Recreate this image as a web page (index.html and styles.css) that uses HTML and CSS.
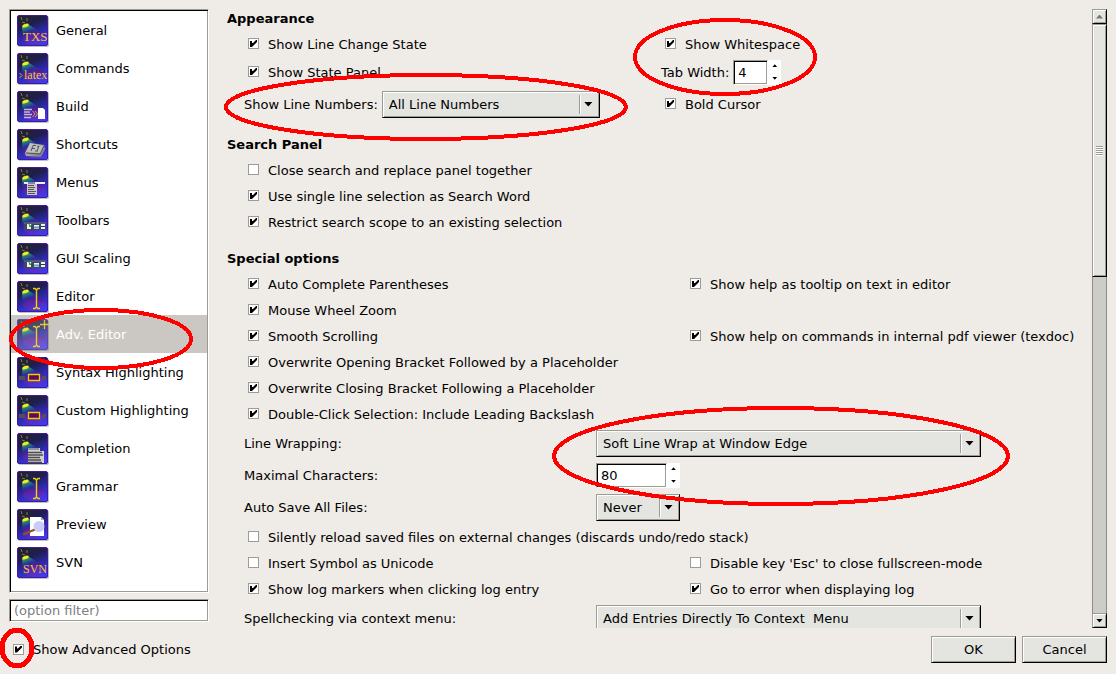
FILE: index.html
```html
<!DOCTYPE html>
<html lang="en">
<head>
<meta charset="utf-8">
<title>Configure TeXstudio</title>
<link rel="stylesheet" href="styles.css">
</head>
<body>
<svg class="defs" aria-hidden="true">
  <defs>
    <linearGradient id="sky" x1="0.3" y1="0" x2="0.7" y2="1">
      <stop offset="0" stop-color="#22222e"/><stop offset="0.3" stop-color="#1e1e50"/><stop offset="0.65" stop-color="#2c2cb4"/><stop offset="1" stop-color="#3c3cf4"/>
    </linearGradient>
    <linearGradient id="beam" x1="0.1" y1="0" x2="0.5" y2="1">
      <stop offset="0" stop-color="#b8d420"/><stop offset="0.16" stop-color="#20907a"/><stop offset="0.36" stop-color="#2c30a0"/><stop offset="0.6" stop-color="#64148c"/><stop offset="1" stop-color="#5038d8"/>
    </linearGradient>
    <linearGradient id="key" x1="0" y1="0" x2="1" y2="1">
      <stop offset="0" stop-color="#d8d8d8"/><stop offset="1" stop-color="#707070"/>
    </linearGradient>
    <symbol id="base" viewBox="0 0 32 32">
      <rect x="1" y="1" width="31" height="31" rx="2" fill="#000" opacity="0.25"/>
      <rect x="0.5" y="0.5" width="30" height="30" rx="1.5" fill="url(#sky)" stroke="#46189c"/>
      <path d="M5 12L12 10L27 19Q30 28 17 29Q7 29 6 24Z" fill="url(#beam)" opacity="0.85"/>
      <ellipse cx="17" cy="24" rx="11" ry="5" fill="#5c32c4" opacity="0.4"/>
      <path d="M3 1L5 4L3 6L6 11L12 8L11 2L9 5L6 5Z" fill="#24242a"/>
      <path d="M4 2L5 5M10 3L10 6M5 7L8 8" stroke="#77777e" fill="none"/>
      <ellipse cx="8.500" cy="10.500" rx="3.400" ry="1.700" transform="rotate(-20 8.500 10.500)" fill="#ecec28"/>
    </symbol>
    <symbol id="cursor" viewBox="0 0 32 32">
      <path d="M16 7.500H18L19.500 9L21 7.500H23M19.500 9V26M16 27.500H18L19.500 26L21 27.500H23" fill="none" stroke="#f0d400" stroke-width="1.400"/>
    </symbol>
    <symbol id="bars" viewBox="0 0 32 32">
      <path d="M7 17.500H29V25H7Z" fill="#3c4860"/><path d="M7 18H29" stroke="#63708a"/>
      <path d="M10 19H14V24H10ZM17 20H22V24H17ZM24 19H28V24H24Z" fill="#eef2f4"/>
      <path d="M12 19L13 22L15 19" stroke="#249024" fill="none"/><path d="M17 22.500H22" stroke="#5f9cd4" stroke-width="2"/><path d="M24 21.500H28" stroke="#30343c"/>
    </symbol>
    <symbol id="marker" viewBox="0 0 32 32">
      <path d="M2 19H8V23H2ZM25 19H29V23H25Z" fill="#50505a"/><path d="M11.500 17.500H22.500V23.500H11.500Z" fill="#5a0c58" stroke="#f4c800" stroke-width="1.300"/>
    </symbol>
  </defs>
</svg>

<form class="dialog">
  <main class="main">
    <aside class="sidebar">
      <ul class="pages">
        <li><button type="button" class="page"><svg class="icon"><use href="#base"/><text x="6" y="26" class="icon-text large">TXS</text></svg>General</button></li>
        <li><button type="button" class="page"><svg class="icon"><use href="#base"/><path d="M2.500 20L5 22.500L2.500 25" fill="none" stroke="#d8b030"/><text x="7" y="26" class="icon-text">latex</text></svg>Commands</button></li>
        <li><button type="button" class="page"><svg class="icon"><use href="#base"/><path d="M7 18.500H15M7 21H13M7 23.500H15M7 26.500H14" stroke="#bcbcd0" stroke-width="1.500"/><path d="M15.500 20L18 23L15.500 26M18 20L20.500 23L18 26" fill="none" stroke="#d89838"/><path d="M21 17H26L28 19V28H21Z" fill="#fff"/></svg>Build</button></li>
        <li><button type="button" class="page"><svg class="icon"><use href="#base"/><path d="M8 24L13 14L27 16L28 20L24 28L9 27Z" fill="url(#key)"/><path d="M9 24L23 25L27 17" fill="none" stroke="#505050"/><path d="M13 15L26 17L23 24L10 23Z" fill="#c0c0c0"/><path d="M14 22L16 16.500H19M15 19.500H18M20 18L22 17L20 22M18 22H21" fill="none" stroke="#555"/></svg>Shortcuts</button></li>
        <li><button type="button" class="page"><svg class="icon"><use href="#base"/><path d="M7 15H28V17H7Z" fill="#ececf4"/><path d="M11 15H18V17H11Z" fill="#8080b8"/><path d="M10 17H20V28H10Z" fill="#c8c8c8"/><path d="M11 18.500H17M11 20.500H18M11 22.500H17M11 24.500H19M11 26.500H18" stroke="#555"/></svg>Menus</button></li>
        <li><button type="button" class="page"><svg class="icon"><use href="#base"/><use href="#bars"/></svg>Toolbars</button></li>
        <li><button type="button" class="page"><svg class="icon"><use href="#base"/><use href="#bars"/></svg>GUI Scaling</button></li>
        <li><button type="button" class="page"><svg class="icon"><use href="#base"/><use href="#cursor"/></svg>Editor</button></li>
        <li><button type="button" class="page selected" aria-current="page"><svg class="icon"><use href="#base"/><use href="#cursor"/><path d="M27.500 1V10M23 5.500H32" stroke="#e8d000" stroke-width="1.300"/></svg>Adv. Editor</button></li>
        <li><button type="button" class="page"><svg class="icon"><use href="#base"/><use href="#marker"/></svg>Syntax Highlighting</button></li>
        <li><button type="button" class="page"><svg class="icon"><use href="#base"/><use href="#marker"/></svg>Custom Highlighting</button></li>
        <li><button type="button" class="page"><svg class="icon"><use href="#base"/><path d="M11 15H23V18H27V30H11Z" fill="#d0d0d0"/><path d="M11 16H22" stroke="#9090a8" stroke-width="2"/><path d="M11 19.500H25M11 22H26M11 24.500H23M11 27H24M11 29.500H25" stroke="#4c4c50" stroke-width="1.400"/></svg>Completion</button></li>
        <li><button type="button" class="page"><svg class="icon"><use href="#base"/><use href="#cursor"/></svg>Grammar</button></li>
        <li><button type="button" class="page"><svg class="icon"><use href="#base"/><path d="M13 8H24L27 11V27H13Z" fill="#fff"/><path d="M24 8V11H27Z" fill="#aaa"/><path d="M6 25.500L18 20.500" stroke="#8a5818" stroke-width="2.200"/><circle cx="22" cy="17.500" r="5.500" fill="#ccccf8"/></svg>Preview</button></li>
        <li><button type="button" class="page"><svg class="icon"><use href="#base"/><text x="6" y="26" class="icon-text">SVN</text></svg>SVN</button></li>
      </ul>
      <input class="filter" type="text" placeholder="(option filter)" aria-label="Option filter">
    </aside>

    <div class="pane">
      <section class="group appearance">
        <h2>Appearance</h2>
        <div class="columns">
          <label class="check"><input type="checkbox" checked>Show Line Change State</label>
          <label class="check"><input type="checkbox" checked>Show Whitespace</label>
        </div>
        <div class="columns medium">
          <label class="check"><input type="checkbox" checked>Show State Panel</label>
          <div class="inline">
            <label for="tab">Tab Width:</label>
            <span class="spin spin-small"><input id="tab" type="text" inputmode="numeric" value="4"><span class="steps"><button type="button" aria-label="Increase tab width"></button><button type="button" aria-label="Decrease tab width"></button></span></span>
          </div>
        </div>
        <div class="columns tall">
          <div class="inline">
            <label for="numbers">Show Line Numbers:</label>
            <span class="combo combo-medium"><select id="numbers"><option>All Line Numbers</option></select></span>
          </div>
          <label class="check"><input type="checkbox" checked>Bold Cursor</label>
        </div>
      </section>

      <section class="group">
        <h2>Search Panel</h2>
        <label class="check"><input type="checkbox">Close search and replace panel together</label>
        <label class="check"><input type="checkbox" checked>Use single line selection as Search Word</label>
        <label class="check"><input type="checkbox" checked>Restrict search scope to an existing selection</label>
      </section>

      <section class="group special">
        <h2>Special options</h2>
        <div class="columns">
          <label class="check"><input type="checkbox" checked>Auto Complete Parentheses</label>
          <label class="check"><input type="checkbox" checked>Show help as tooltip on text in editor</label>
        </div>
        <label class="check"><input type="checkbox" checked>Mouse Wheel Zoom</label>
        <div class="columns">
          <label class="check"><input type="checkbox" checked>Smooth Scrolling</label>
          <label class="check"><input type="checkbox" checked>Show help on commands in internal pdf viewer (texdoc)</label>
        </div>
        <label class="check"><input type="checkbox" checked>Overwrite Opening Bracket Followed by a Placeholder</label>
        <label class="check"><input type="checkbox" checked>Overwrite Closing Bracket Following a Placeholder</label>
        <label class="check"><input type="checkbox" checked>Double-Click Selection: Include Leading Backslash</label>
        <div class="field">
          <label for="wrap">Line Wrapping:</label>
          <span class="combo"><select id="wrap"><option>Soft Line Wrap at Window Edge</option></select></span>
        </div>
        <div class="field">
          <label for="max">Maximal Characters:</label>
          <span class="spin spin-large"><input id="max" type="text" inputmode="numeric" value="80"><span class="steps"><button type="button" aria-label="Increase maximal characters"></button><button type="button" aria-label="Decrease maximal characters"></button></span></span>
        </div>
        <div class="field">
          <label for="save">Auto Save All Files:</label>
          <span class="combo combo-small"><select id="save"><option>Never</option></select></span>
        </div>
        <label class="check"><input type="checkbox">Silently reload saved files on external changes (discards undo/redo stack)</label>
        <div class="columns">
          <label class="check"><input type="checkbox">Insert Symbol as Unicode</label>
          <label class="check"><input type="checkbox">Disable key 'Esc' to close fullscreen-mode</label>
        </div>
        <div class="columns">
          <label class="check"><input type="checkbox" checked>Show log markers when clicking log entry</label>
          <label class="check"><input type="checkbox" checked>Go to error when displaying log</label>
        </div>
        <div class="field">
          <label for="spell">Spellchecking via context menu:</label>
          <span class="combo"><select id="spell"><option>Add Entries Directly To Context&nbsp; Menu</option></select></span>
        </div>
      </section>
    </div>

    <div class="scrollbar">
      <button type="button" class="scroll-button" aria-label="Scroll up" disabled></button>
      <div class="track"><div class="thumb"><span class="grip"></span></div></div>
      <button type="button" class="scroll-button down" aria-label="Scroll down"></button>
    </div>
  </main>

  <footer class="footer">
    <label class="check"><input type="checkbox" checked>Show Advanced Options</label>
    <div class="actions">
      <button type="submit" class="push">OK</button>
      <button type="button" class="push">Cancel</button>
    </div>
  </footer>
</form>

<svg class="marks" aria-hidden="true">
  <ellipse cx="426" cy="107" rx="200" ry="32"/>
  <ellipse cx="725" cy="57" rx="90" ry="37"/>
  <ellipse cx="781" cy="456" rx="227" ry="48"/>
  <ellipse cx="101" cy="339" rx="90" ry="29"/>
  <ellipse class="thick" cx="17" cy="648" rx="15" ry="18"/>
</svg>
</body>
</html>
```

FILE: styles.css
```css
:root {
  --window: #efebe7;
  --face: #e4e5e0;
  --shade: #9c9c94;
}

* { box-sizing: border-box; }

body {
  margin: 0;
  background: var(--window);
  color: #000;
  font: 13px/16px "DejaVu Sans", Verdana, sans-serif;
  position: relative;
  overflow: hidden;
}

button, input, select { font: inherit; color: inherit; margin: 0; }

.defs { position: absolute; width: 0; height: 0; }

.dialog {
  display: flex;
  flex-direction: column;
  height: 100vh;
  padding: 5px 9px 11px;
}

.main { display: flex; flex: 1; min-height: 0; }

/* Page list */
.sidebar {
  display: flex;
  flex-direction: column;
  gap: 6px;
  width: 200px;
  padding: 4px 0 6px;
}

.pages, .filter, .spin input {
  background: #fff;
  border: 1px solid;
  border-color: var(--shade) #fff #fff var(--shade);
  box-shadow: inset 1px 1px #000, inset -1px -1px var(--shade);
}

.pages {
  flex: 1;
  min-height: 0;
  margin: 0;
  padding: 1px;
  list-style: none;
  overflow: hidden;
}

.page {
  display: flex;
  align-items: center;
  gap: 7px;
  width: 100%;
  height: 38px;
  padding: 2px 6px 0;
  border: 0;
  background: none;
  text-align: left;
}

.page.selected { background: #cbc8c3; color: #fff; }
.page.selected .icon { opacity: 0.75; }

.icon { width: 32px; height: 32px; flex: none; }
.icon-text { font: 12px "Liberation Serif", serif; fill: #ecc832; }
.icon-text.large { font-size: 13px; }

.filter { width: 100%; height: 23px; padding: 0 4px; }
.filter::placeholder { color: #808080; opacity: 1; }

/* Options */
.pane { flex: 1; min-width: 0; overflow: hidden; padding-left: 18px; }

.group { padding: 0 0 10px 17px; }

h2 {
  margin: 0 0 0 -17px;
  padding-top: 2px;
  font-size: 13px;
  line-height: 24px;
}

.columns { display: grid; align-items: center; min-height: 26px; }
.columns.medium { min-height: 30px; }
.columns.tall { min-height: 34px; }
.appearance .columns { grid-template-columns: 417fr 431fr; }
.special .columns { grid-template-columns: 442fr 406fr; }

.field {
  display: grid;
  grid-template-columns: 352fr 385fr 111fr;
  align-items: center;
  height: 32px;
}

.field + .check { margin-top: 1px; }

.inline { display: flex; align-items: center; gap: 4px; }
.inline label, .field label { padding-top: 1px; }

.check {
  display: flex;
  align-items: center;
  gap: 9px;
  height: 26px;
  padding: 1px 0 0 4px;
  white-space: nowrap;
}

.check input {
  appearance: none;
  flex: none;
  width: 11px;
  height: 11px;
  margin-bottom: 2px;
  padding: 1px;
  border: 1px solid var(--shade);
  background: #fff;
}

.check input:checked::before {
  content: "";
  display: block;
  width: 7px;
  height: 7px;
  background: #000;
  clip-path: polygon(0 1px, 2px 1px, 2px 3px, 3px 3px, 6px 0, 7px 0, 7px 2px, 2px 7px, 0 7px);
}

/* Raised controls */
.combo, .push, .scroll-button, .thumb {
  background: var(--face);
  border: 1px solid;
  border-color: var(--shade) #000 #000 var(--shade);
  box-shadow: inset 1px 1px #fff, inset -1px -1px var(--shade);
}

.combo { position: relative; display: block; height: 27px; }
.combo-medium { width: 218px; }
.combo-small { width: 84px; }

.combo select {
  appearance: none;
  display: block;
  width: 100%;
  height: 100%;
  padding: 1px 22px 0 6px;
  border: 0;
  background: none;
}

.combo::before {
  content: "";
  position: absolute;
  right: 18px;
  top: 3px;
  bottom: 3px;
  width: 2px;
  background: linear-gradient(to right, var(--shade) 50%, #fff 50%);
}

.combo::after {
  content: "";
  position: absolute;
  right: 6px;
  top: 10px;
  width: 9px;
  height: 5px;
  background: #000;
  clip-path: polygon(0 0, 100% 0, 50% 100%);
  pointer-events: none;
}

.spin { display: flex; height: 25px; background: #fff; }
.spin-small { width: 48px; }
.spin-large { width: 84px; }
.spin input { flex: 1; min-width: 0; padding: 1px 4px 0; }
.steps { display: flex; flex-direction: column; width: 13px; }

.steps button {
  display: grid;
  place-items: center;
  flex: 1;
  padding: 0;
  border: 0;
  background: none;
}

.steps button::before {
  content: "";
  width: 5px;
  height: 3px;
  background: #000;
  clip-path: polygon(50% 0, 100% 100%, 0 100%);
}

.steps button:last-child::before { clip-path: polygon(0 0, 100% 0, 50% 100%); }

/* Scroll bar */
.scrollbar {
  display: flex;
  flex-direction: column;
  width: 15px;
  padding-top: 4px;
}

.scroll-button {
  display: grid;
  place-items: center;
  width: 15px;
  height: 15px;
  padding: 0;
}

.scroll-button::before {
  content: "";
  width: 7px;
  height: 4px;
  background: #777;
  clip-path: polygon(50% 0, 100% 100%, 0 100%);
}

.scroll-button.down::before { background: #000; clip-path: polygon(0 0, 100% 0, 50% 100%); }

.track {
  flex: 1;
  background: #cdcdc8;
  box-shadow: inset 1px 0 #8c8c88, inset -1px 0 #8c8c88;
}

.thumb { display: grid; place-items: center; height: 43%; }

.grip {
  width: 7px;
  height: 10px;
  background: repeating-linear-gradient(var(--shade) 0 1px, #fff 1px 2px);
}

/* Footer */
.footer {
  display: flex;
  align-items: center;
  justify-content: space-between;
  padding-top: 8px;
}

.actions { display: flex; gap: 6px; }
.push { width: 85px; height: 27px; padding: 0; }

/* Highlight rings drawn over the dialog */
.marks {
  position: absolute;
  inset: 0;
  width: 100%;
  height: 100%;
  pointer-events: none;
}

.marks ellipse { fill: none; stroke: #f00; stroke-width: 4px; shape-rendering: crispEdges; }
.marks .thick { stroke-width: 5px; }
```
